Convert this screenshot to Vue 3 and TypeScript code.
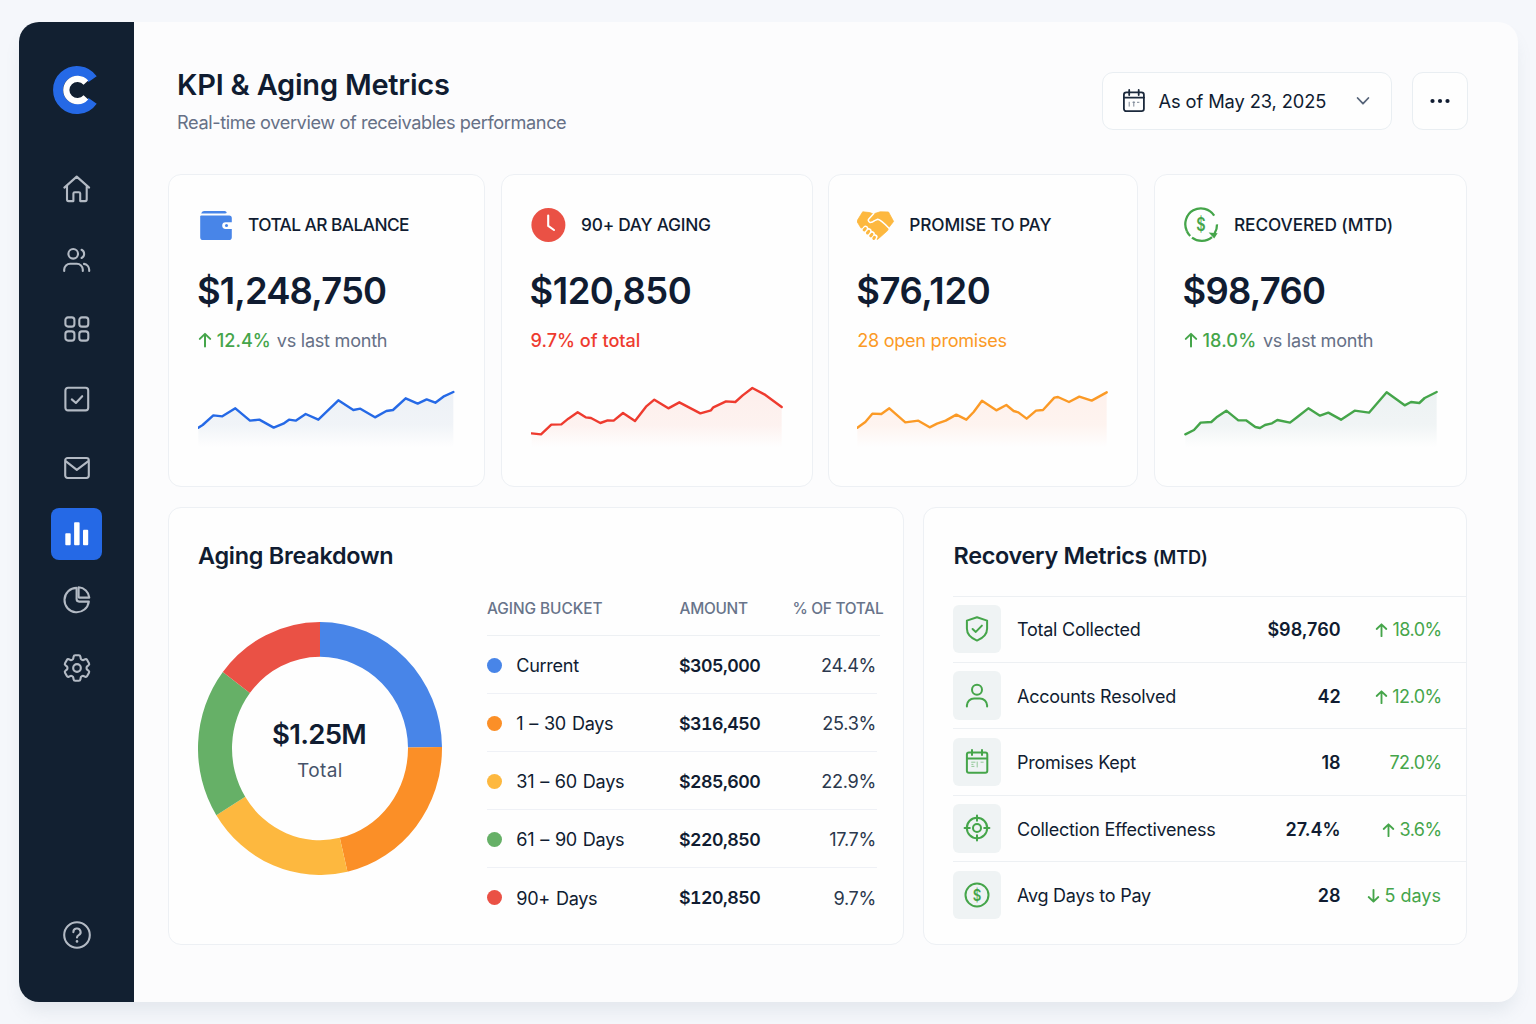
<script setup lang="ts">
type Kpi = {
  key: string
  label: string
  value: string
  trend?: string
  note: string
  line: string
  tint: string
  points: number[][]
}

const pts = (s: string): number[][] => s.split(' ').map((p) => p.split(',').map(Number))

const kpis: Kpi[] = [
  {
    key: 'balance',
    label: 'TOTAL AR BALANCE',
    value: '$1,248,750',
    trend: '12.4%',
    note: 'vs last month',
    line: '#2569e6',
    tint: '#edf1f6',
    points: pts('1,128 14,120 46,91 73,94 112,70 156,107 184,104 227,128 256,116 273,104 293,107 323,87 361,104 421,46 466,75 487,71 531,97 565,78 585,75 623,40 659,56 686,43 712,53 736,35 766,21'),
  },
  {
    key: 'aging',
    label: '90+ DAY AGING',
    value: '$120,850',
    note: '9.7% of total',
    line: '#ee3b2f',
    tint: '#fdefec',
    points: pts('2,145 30,148 61,119 91,118 112,101 140,82 164,97 180,99 208,114 230,106 248,107 276,84 312,108 345,65 370,44 412,70 445,52 508,85 540,76 547,67 585,49 613,51 635,31 664,9 700,28 752,66'),
  },
  {
    key: 'promise',
    label: 'PROMISE TO PAY',
    value: '$76,120',
    note: '28 open promises',
    line: '#fb9a26',
    tint: '#fef1ec',
    points: pts('1,128 25,111 46,86 73,87 97,70 145,112 184,107 218,127 240,116 266,107 298,89 328,104 350,81 375,47 418,76 448,60 470,78 484,82 509,101 537,77 558,75 592,38 603,36 636,51 667,35 704,47 749,22'),
  },
  {
    key: 'recovered',
    label: 'RECOVERED (MTD)',
    value: '$98,760',
    trend: '18.0%',
    note: 'vs last month',
    line: '#45a54a',
    tint: '#edf2f3',
    points: pts('4,148 30,135 50,113 82,111 100,95 127,77 163,106 186,106 214,126 228,129 243,120 264,115 280,105 318,113 340,96 373,70 408,92 433,83 471,104 512,77 555,83 608,22 662,61 681,51 706,54 722,39 758,21'),
  },
]

const join = (p: number[][]): string => p.map((a) => a.join(',')).join(' ')
const area = (p: number[][]): string =>
  `${join(p)} ${p[p.length - 1][0]},186 ${p[0][0]},186`

const buckets = [
  { name: 'Current', amount: '$305,000', share: '24.4%', color: '#4885e8' },
  { name: '1 – 30 Days', amount: '$316,450', share: '25.3%', color: '#fb8f27' },
  { name: '31 – 60 Days', amount: '$285,600', share: '22.9%', color: '#fdb83f' },
  { name: '61 – 90 Days', amount: '$220,850', share: '17.7%', color: '#66b067' },
  { name: '90+ Days', amount: '$120,850', share: '9.7%', color: '#ea5145' },
]

/* Segment boundaries in degrees, clockwise from the top. */
const stops = [0, 89.3, 167, 238.2, 307.2, 360]

const ringPoint = (deg: number, rx: number, ry: number): string => {
  const t = (deg * Math.PI) / 180
  return `${(rx * Math.sin(t)).toFixed(2)} ${(-ry * Math.cos(t)).toFixed(2)}`
}

const segments = buckets.map((b, i) => {
  const from = stops[i]
  const to = stops[i + 1]
  return {
    color: b.color,
    d: `M${ringPoint(from, 122, 126.5)}A122 126.5 0 0 1 ${ringPoint(to, 122, 126.5)}L${ringPoint(to, 88, 91.7)}A88 91.7 0 0 0 ${ringPoint(from, 88, 91.7)}Z`,
  }
})

const metrics = [
  { icon: 'shield', name: 'Total Collected', value: '$98,760', dir: 'up', change: '18.0%' },
  { icon: 'user', name: 'Accounts Resolved', value: '42', dir: 'up', change: '12.0%' },
  { icon: 'calendar', name: 'Promises Kept', value: '18', dir: '', change: '72.0%' },
  { icon: 'target', name: 'Collection Effectiveness', value: '27.4%', dir: 'up', change: '3.6%' },
  { icon: 'dollar', name: 'Avg Days to Pay', value: '28', dir: 'down', change: '5 days' },
]
</script>

<template>
  <div class="page">
    <div class="window">
      <aside class="sidebar">
        <svg class="logo" viewBox="0 0 48 50">
          <path d="M39.6 14.1A19 19 0 1 0 39.6 35.9" fill="none" stroke="#2569e6" stroke-width="10" />
          <path d="M32.9 17.6A11.2 11.2 0 1 0 32.9 32.4" fill="none" stroke="#fff" stroke-width="6.2" />
        </svg>
        <nav class="nav">
          <a class="item">
            <svg viewBox="0 0 28 28"><path d="M1.4 12.6 13.7 1.6 26.1 12.6M4 10.8V24.6Q4 26.1 5.5 26.1H10.4V18.6Q10.4 17.2 11.8 17.2H15.8Q17.2 17.2 17.2 18.6V26.1H22.2Q23.7 26.1 23.7 24.6V10.8" /></svg>
          </a>
          <a class="item">
            <svg viewBox="0 0 28 28"><circle cx="10.2" cy="6.8" r="4.8" /><path d="M1.2 24V22.6A6 6 0 0 1 7.2 16.7H13.8A6 6 0 0 1 19.8 22.6V24M18.6 2.8A4.6 4.6 0 0 1 18.6 11M21 16.9A6 6 0 0 1 26.2 22.8V24" /></svg>
          </a>
          <a class="item">
            <svg viewBox="0 0 28 28"><rect x="2.4" y="2.4" width="9" height="9.2" rx="2.6" /><rect x="16.3" y="2.4" width="9" height="9.2" rx="2.6" /><rect x="2.4" y="16.4" width="9" height="9.2" rx="2.6" /><rect x="16.3" y="16.4" width="9" height="9.2" rx="2.6" /></svg>
          </a>
          <a class="item">
            <svg viewBox="0 0 28 28"><rect x="2.4" y="2.8" width="22.8" height="22.6" rx="2.6" /><path d="M8.8 14.4 12.9 18 19.2 11.2" /></svg>
          </a>
          <a class="item">
            <svg viewBox="0 0 28 28"><rect x="2.2" y="4" width="23.6" height="20" rx="2.4" /><path d="M3 7.4 13.8 15.8 25 7.4" /></svg>
          </a>
          <a class="item active">
            <svg viewBox="0 0 28 28"><rect x="2.3" y="13.2" width="5.4" height="12" rx=".9" /><rect x="11.1" y="2.2" width="5.5" height="23" rx=".9" /><rect x="20" y="9.8" width="5.2" height="15.4" rx=".9" /></svg>
          </a>
          <a class="item">
            <svg viewBox="0 0 28 28"><path d="M13.6 1.9A12.2 12.2 0 1 0 25.8 15.6H16.1Q13.6 15.6 13.6 13.1Z" /><path d="M15.6 1.3A11.4 11.4 0 0 1 26.3 11.6H16.4Q15.6 11.6 15.6 10.8Z" /></svg>
          </a>
          <a class="item">
            <svg class="gear" viewBox="0 0 24 24"><path d="M9.594 3.94c.09-.542.56-.94 1.11-.94h2.593c.55 0 1.02.398 1.11.94l.213 1.281c.063.374.313.686.645.87.074.04.147.083.22.127.325.196.72.257 1.075.124l1.217-.456a1.125 1.125 0 0 1 1.37.49l1.296 2.247a1.125 1.125 0 0 1-.26 1.431l-1.003.827c-.293.241-.438.613-.43.992a7.723 7.723 0 0 1 0 .255c-.008.378.137.75.43.991l1.004.827c.424.35.534.955.26 1.43l-1.298 2.247a1.125 1.125 0 0 1-1.369.491l-1.217-.456c-.355-.133-.75-.072-1.076.124a6.47 6.47 0 0 1-.22.128c-.331.183-.581.495-.644.869l-.213 1.281c-.09.543-.56.94-1.11.94h-2.594c-.55 0-1.019-.398-1.11-.94l-.213-1.281c-.062-.374-.312-.686-.644-.87a6.52 6.52 0 0 1-.22-.127c-.325-.196-.72-.257-1.076-.124l-1.217.456a1.125 1.125 0 0 1-1.369-.49l-1.297-2.247a1.125 1.125 0 0 1 .26-1.431l1.004-.827c.292-.24.437-.613.43-.991a6.932 6.932 0 0 1 0-.255c.007-.38-.138-.751-.43-.992l-1.004-.827a1.125 1.125 0 0 1-.26-1.43l1.297-2.247a1.125 1.125 0 0 1 1.37-.491l1.216.456c.356.133.751.072 1.076-.124.072-.044.146-.086.22-.128.332-.183.582-.495.644-.869l.214-1.28Z" /><circle cx="12" cy="12" r="2.7" /></svg>
          </a>
        </nav>
        <a class="item help">
          <svg viewBox="0 0 28 28"><circle cx="14" cy="14" r="12.8" /><path d="M10.4 11.1A3.6 3.5 0 1 1 15.7 14.1Q14 15.1 14 16.5" /><path d="M14 20.2V20.4" stroke-width="2.6" /></svg>
        </a>
      </aside>

      <main class="main">
        <header class="header">
          <div class="heading">
            <h1>KPI &amp; Aging Metrics</h1>
            <p>Real-time overview of receivables performance</p>
          </div>
          <div class="controls">
            <button class="date">
              <svg class="cal" viewBox="0 0 24 24"><rect x="1.9" y="3.4" width="20" height="18.8" rx="2.4" /><path d="M2 8.6H22M7.2 1V6M16.7 1V6" /><path class="marks" d="M7.2 13.2V17.2M11.8 12.8V17.2M10.9 13.3H12.7M15.4 13.3H17" /></svg>
              <span>As of May 23, 2025</span>
              <svg class="chevron" viewBox="0 0 14 10"><path d="M1.6 2 7 7.7 12.4 2" /></svg>
            </button>
            <button class="more" aria-label="More">
              <svg viewBox="0 0 20 6"><circle cx="2.5" cy="3" r="2.1" /><circle cx="10" cy="3" r="2.1" /><circle cx="17.5" cy="3" r="2.1" /></svg>
            </button>
          </div>
        </header>

        <section class="kpis">
          <article v-for="k in kpis" :key="k.key" class="card kpi" :class="k.key">
            <div class="kpi-head">
              <div class="kpi-icon">
                <svg v-if="k.key === 'balance'" width="36" height="36" viewBox="0 0 36 36">
                  <path d="M6 4H26.6Q28.4 4 28.8 6.1L27 6.6H3.2Q3.6 4 6 4Z" fill="#4885e8" />
                  <path d="M3.4 8.4H31.2Q33.8 8.4 33.8 11V15.2H27.6A3.2 3.2 0 0 0 27.6 22H33.8V30.2Q33.8 33 31 33H5Q2.2 33 2.2 30.2V9Q2.4 8.4 3.4 8.4Z" fill="#4885e8" />
                  <circle cx="28.5" cy="18.5" r="1.5" fill="#4885e8" />
                </svg>
                <svg v-else-if="k.key === 'aging'" width="35" height="36" viewBox="0 0 35 36">
                  <circle cx="17.4" cy="18" r="17" fill="#ea5145" />
                  <path d="M17.2 8.6V18.9L23 23" fill="none" stroke="#fff" stroke-width="2.1" stroke-linecap="round" stroke-linejoin="round" />
                </svg>
                <svg v-else-if="k.key === 'promise'" width="38" height="36" viewBox="0.8 0 38 36">
                  <path d="M6.5 4.8 13.6 5.6 17 7 24 4.8 32.3 5 37.4 14.4 32.6 20.6 31.4 23.6 21.4 32.4 17 30 7 21.2 4.6 20.8.6 14.2Z" fill="#fdb83f" stroke="#fdb83f" stroke-width=".8" stroke-linejoin="round" />
                  <path d="M17.6 6.4 12.4 12.2Q11.4 14.2 13.6 15.4 16 15.6 18.4 13.6L21.6 12.2Q24.6 12.6 32.8 21.2" fill="none" stroke="#fff" stroke-width="1.5" stroke-linecap="round" stroke-linejoin="round" />
                  <g fill="none" stroke-linecap="round">
                    <path d="M8.4 22.4 9.4 21.2M11.6 25.4 12.8 23.8M14.8 28.4 16 26.8M18 31 18.8 29.8" stroke="#fff" stroke-width="5.2" />
                    <path d="M7.9 22.9 9.1 21.5M11.2 26 12.5 24.3M14.5 28.9 15.7 27.3M17.6 31.4 18.3 30.3" stroke="#fdb83f" stroke-width="3" />
                  </g>
                </svg>
                <svg v-else width="36" height="36" viewBox="0 0 36 36">
                  <g fill="none" stroke="#45a54a" stroke-width="2.3">
                    <path d="M30.2 8.6A15.7 15.9 0 0 0 2.9 24.2" />
                    <path d="M2.9 24.2A15.9 15.9 0 0 0 6.2 29M8 30.6A15.9 15.9 0 0 0 28 30.2" />
                    <path d="M33 17.4A15.9 15.9 0 0 1 30.6 26.4" />
                  </g>
                  <path d="M24.6 25.4 33.6 26.2 30.2 31.6Z" fill="#45a54a" />
                  <text x="21.2" y="24.3" text-anchor="middle" transform="scale(.8 1)" class="coin">$</text>
                </svg>
              </div>
              <h2>{{ k.label }}</h2>
            </div>
            <div class="value">{{ k.value }}</div>
            <div class="change">
              <template v-if="k.trend">
                <svg class="arrow" viewBox="0 0 14 16"><path d="M7 14.6V2M1.8 6.9 7 1.9 12.2 6.9" /></svg>
                <b>{{ k.trend }}</b>
              </template>
              <span>{{ k.note }}</span>
            </div>
            <svg class="spark" viewBox="0 0 774 195">
              <defs>
                <linearGradient :id="'fill-' + k.key" x1="0" y1="20" x2="0" y2="186" gradientUnits="userSpaceOnUse">
                  <stop offset="0" :stop-color="k.tint" />
                  <stop offset=".6" :stop-color="k.tint" stop-opacity=".8" />
                  <stop offset="1" :stop-color="k.tint" stop-opacity="0" />
                </linearGradient>
              </defs>
              <polygon :points="area(k.points)" :fill="`url(#fill-${k.key})`" />
              <polyline :points="join(k.points)" fill="none" :stroke="k.line" stroke-width="7.2" stroke-linejoin="round" stroke-linecap="round" />
            </svg>
          </article>
        </section>

        <section class="panels">
          <article class="card breakdown">
            <h3>Aging Breakdown</h3>
            <div class="breakdown-body">
              <div class="donut">
                <svg viewBox="-122 -126.5 244 253">
                  <path v-for="s in segments" :key="s.color" :d="s.d" :fill="s.color" />
                </svg>
                <div class="donut-label">
                  <strong>$1.25M</strong>
                  <span>Total</span>
                </div>
              </div>
              <div class="table">
                <div class="thead">
                  <span>AGING BUCKET</span>
                  <span>AMOUNT</span>
                  <span>% OF TOTAL</span>
                </div>
                <div v-for="b in buckets" :key="b.name" class="trow">
                  <i :style="{ background: b.color }"></i>
                  <span class="name">{{ b.name }}</span>
                  <span class="amount">{{ b.amount }}</span>
                  <span class="share">{{ b.share }}</span>
                </div>
              </div>
            </div>
          </article>

          <article class="card recovery">
            <h3>Recovery Metrics <small>(MTD)</small></h3>
            <div v-for="m in metrics" :key="m.name" class="metric">
              <div class="tile">
                <svg viewBox="0 0 28 28">
                  <template v-if="m.icon === 'shield'">
                    <path d="M14 2.2 24.1 5.6V13.6Q24.1 21.6 14 25.6 3.9 21.6 3.9 13.6V5.6Z" />
                    <path d="M9.6 14 12.8 16.9 18.9 10.6" />
                  </template>
                  <template v-else-if="m.icon === 'user'">
                    <circle cx="14" cy="7.7" r="5" />
                    <path d="M3.9 24.6V23.4A7.2 7.2 0 0 1 11.1 16.4H16.9A7.2 7.2 0 0 1 24.1 23.4V24.6" />
                  </template>
                  <template v-else-if="m.icon === 'calendar'">
                    <rect x="3.9" y="4.4" width="20.4" height="20.4" rx="2" />
                    <path d="M4 10.4H24M9 2V7M19 2V7" />
                    <path class="marks" d="M8.6 14.2H12M8.8 16.4H10M8.8 18.4H11M14.2 14V19M18 14.2H20.2" />
                  </template>
                  <template v-else-if="m.icon === 'target'">
                    <circle cx="14" cy="14" r="10.2" />
                    <circle cx="14" cy="14" r="4" />
                    <path d="M14 1.6V6.8M14 21.2V26.4M1.6 14H6.8M21.2 14H26.4" />
                  </template>
                  <template v-else>
                    <circle cx="14" cy="14" r="11.5" />
                    <text x="17.5" y="20" text-anchor="middle" transform="scale(.8 1)" class="coin">$</text>
                  </template>
                </svg>
              </div>
              <span class="metric-name">{{ m.name }}</span>
              <span class="metric-value">{{ m.value }}</span>
              <span class="metric-change" :class="{ days: m.dir === 'down' }">
                <svg v-if="m.dir" class="arrow" :class="m.dir" viewBox="0 0 14 16"><path d="M7 14.6V2M1.8 6.9 7 1.9 12.2 6.9" /></svg>
                {{ m.change }}
              </span>
            </div>
          </article>
        </section>
      </main>
    </div>
  </div>
</template>

<style>
body {
  background: #f5f7fb;
}
</style>

<style scoped>
* {
  box-sizing: border-box;
}

.page {
  height: 1024px;
  padding: 22px 18px 22px 19px;
  overflow: hidden;
  background: #f5f7fb;
  font-family: Inter, 'Liberation Sans', sans-serif;
  color: #101c31;
}

.window {
  display: flex;
  height: 980px;
  border-radius: 20px;
  overflow: hidden;
  background: #fcfcfd;
  box-shadow: 0 12px 18px -4px rgba(112, 134, 150, 0.14);
}

/* Sidebar */
.sidebar {
  display: flex;
  flex-direction: column;
  align-items: center;
  width: 114.5px;
  padding: 43px 0 0 1px;
  background: #122031;
}

.logo {
  width: 48px;
  height: 50px;
}

.nav {
  display: flex;
  flex-direction: column;
  align-items: center;
  margin-top: 48px;
}

.item {
  display: flex;
  align-items: center;
  justify-content: center;
  width: 51px;
  height: 52px;
  border-radius: 8px;
}

.item:nth-child(2) { margin-top: 19.5px; }
.item:nth-child(3) { margin-top: 16.5px; }
.item:nth-child(4) { margin-top: 18px; }
.item:nth-child(5) { margin-top: 17.3px; }
.item:nth-child(6) { margin-top: 14.2px; }
.item:nth-child(7) { margin-top: 13.2px; }
.item:nth-child(8) { margin-top: 16.6px; }

.item svg {
  width: 28px;
  height: 28px;
  fill: none;
  stroke: #b3bac4;
  stroke-width: 2.1;
  stroke-linecap: round;
  stroke-linejoin: round;
}

.item .gear {
  width: 34px;
  height: 34px;
  stroke-width: 1.5;
}

.item.active {
  background: #2569e6;
}

.item.active svg {
  fill: #fff;
  stroke: none;
}

.item.help {
  margin-top: auto;
  margin-bottom: 41px;
}

/* Header */
.main {
  flex: 1;
  padding: 43.5px 50.5px 0 34.5px;
}

.header {
  display: flex;
  justify-content: space-between;
  height: 108.5px;
}

.heading {
  padding-left: 9px;
}

h1,
h2,
h3,
p {
  margin: 0;
}

h1 {
  font-size: 29px;
  font-weight: 600;
  line-height: 37px;
  letter-spacing: -0.22px;
}

.heading p {
  margin-top: 7.5px;
  font-size: 18.2px;
  line-height: 24px;
  letter-spacing: -0.41px;
  color: #667086;
}

.controls {
  display: flex;
  gap: 20.5px;
  height: 58px;
  margin-top: 6.5px;
}

.date,
.more {
  display: flex;
  align-items: center;
  border: 1px solid #e9eef2;
  border-radius: 11px;
  background: #fefefe;
  color: inherit;
  font-family: inherit;
}

.date {
  width: 290px;
  padding: 0 0 0 19px;
  font-size: 18.3px;
  letter-spacing: -0.1px;
}

.cal {
  width: 24px;
  height: 24px;
  margin-right: 13px;
  fill: none;
  stroke: #1b293c;
  stroke-width: 1.8;
  stroke-linecap: round;
}

.cal .marks {
  stroke: #7c8796;
  stroke-width: 1;
}

.chevron {
  width: 14px;
  height: 10px;
  margin-left: 29.5px;
  fill: none;
  stroke: #58657a;
  stroke-width: 1.8;
  stroke-linecap: round;
  stroke-linejoin: round;
}

.more {
  justify-content: center;
  width: 55.5px;
  padding: 0;
}

.more svg {
  width: 20px;
  height: 6px;
  fill: #101c31;
}

/* Cards */
.card {
  border: 1px solid #edf0f4;
  border-radius: 13px;
  background: #fefefe;
}

.kpis {
  display: grid;
  grid-template-columns: 317px 312px 310px 313.5px;
  column-gap: 15.6px;
}

.kpi {
  height: 313px;
  padding: 32px 0 0 29px;
}

.promise {
  padding-left: 28px;
}

.recovered {
  padding-left: 28.8px;
}

.kpi-head {
  display: flex;
  align-items: center;
  height: 36px;
}

.kpi-icon {
  flex: none;
  display: flex;
  width: 50px;
  height: 36px;
}

h2 {
  font-size: 17.3px;
  font-weight: 500;
  line-height: 24px;
  letter-spacing: -0.55px;
  white-space: nowrap;
}

.aging h2 { margin-left: 0.5px; letter-spacing: -0.25px; }
.promise h2 { margin-left: 2px; letter-spacing: -0.1px; }
.recovered h2 { margin-left: 0.4px; letter-spacing: -0.1px; }

.value {
  height: 44px;
  margin-top: 26px;
  margin-left: -1px;
  font-size: 36.4px;
  font-weight: 600;
  line-height: 44px;
  letter-spacing: -0.5px;
}

.balance .value {
  letter-spacing: -0.88px;
}

.promise .value {
  letter-spacing: -0.35px;
}

.recovered .value {
  letter-spacing: -0.75px;
}

.change {
  display: flex;
  align-items: center;
  height: 24px;
  margin-top: 15px;
  font-size: 18.1px;
  letter-spacing: -0.27px;
  color: #667086;
}

.change b {
  margin: 0 6px 0 4.8px;
  font-weight: 500;
  letter-spacing: 0;
  color: #45a54a;
}

.recovered .change b {
  margin-right: 6.6px;
  letter-spacing: 0.15px;
}

.aging .change {
  font-weight: 500;
  letter-spacing: 0;
  color: #ee3b2f;
}

.promise .change {
  color: #fb9a26;
}

.arrow {
  width: 14px;
  height: 16px;
  fill: none;
  stroke: #45a54a;
  stroke-width: 2;
  stroke-linecap: round;
  stroke-linejoin: round;
}

.arrow.down {
  transform: rotate(180deg);
}

.spark {
  display: block;
  width: 258px;
  height: 65px;
  margin-top: 33px;
}

.coin {
  font-size: 18px;
  font-weight: 600;
  fill: #45a54a;
  stroke: none;
}

/* Lower panels */
.panels {
  display: grid;
  grid-template-columns: 735.5px 544.5px;
  column-gap: 19.4px;
  margin-top: 20px;
}

.panels .card {
  height: 438px;
}

h3 {
  font-size: 23.4px;
  font-weight: 600;
  line-height: 32px;
  letter-spacing: -0.25px;
}

.breakdown {
  padding: 32px 0 0 29px;
}

.breakdown-body {
  display: flex;
}

.donut {
  position: relative;
  width: 244px;
  height: 253px;
  margin-top: 50px;
}

.donut svg {
  display: block;
  width: 244px;
  height: 253px;
}

.donut-label {
  position: absolute;
  inset: 0;
  display: flex;
  flex-direction: column;
  align-items: center;
  padding-top: 94px;
}

.donut-label strong {
  margin-left: -2px;
  font-size: 27.6px;
  font-weight: 600;
  line-height: 36px;
  letter-spacing: -0.75px;
}

.donut-label span {
  margin-top: 7px;
  font-size: 19px;
  line-height: 24px;
  letter-spacing: 0.4px;
  color: #46536a;
}

.table {
  width: 397px;
  margin-left: 45px;
  padding-top: 5px;
}

.thead {
  display: grid;
  grid-template-columns: 192.5px 113px auto;
  align-items: center;
  width: 393px;
  height: 59px;
  padding-top: 5px;
  border-bottom: 1px solid #edf0f3;
  font-size: 15.4px;
  font-weight: 500;
  letter-spacing: -0.05px;
  white-space: nowrap;
  color: #68748a;
}

.thead span:nth-child(n + 2) {
  letter-spacing: -0.28px;
}

.trow {
  display: grid;
  grid-template-columns: 29.3px 162.7px 1fr auto;
  align-items: center;
  width: 389.5px;
  height: 57.95px;
  padding: 1.6px 0.5px 0 0;
  border-bottom: 1px solid #eff1f6;
  font-size: 18.1px;
}

.trow:last-child {
  border-bottom: 0;
}

.trow i {
  width: 15px;
  height: 15px;
  border-radius: 50%;
}

.name {
  letter-spacing: -0.32px;
  word-spacing: 1.2px;
  white-space: nowrap;
}

.amount {
  font-size: 17.8px;
  font-weight: 600;
  font-feature-settings: 'tnum';
  letter-spacing: -0.5px;
}

.share {
  letter-spacing: -0.3px;
  color: #2b384d;
}

.recovery {
  padding: 32px 0 0 29.6px;
}

.recovery h3 {
  height: 55.5px;
  letter-spacing: -0.3px;
}

.recovery small {
  font-size: 18.2px;
  letter-spacing: -0.15px;
}

.metric {
  display: flex;
  align-items: center;
  height: 66.4px;
  padding-right: 24.8px;
  border-top: 1px solid #edf0f3;
  font-size: 18px;
  line-height: 24px;
}

.tile {
  display: flex;
  align-items: center;
  justify-content: center;
  width: 47.5px;
  height: 48.5px;
  border-radius: 6px;
  background: #eff3f4;
}

.tile svg {
  width: 28px;
  height: 28px;
  fill: none;
  stroke: #45a54a;
  stroke-width: 2;
  stroke-linecap: round;
  stroke-linejoin: round;
}

.tile .marks {
  stroke-width: 1;
  opacity: 0.55;
}

.tile .coin {
  font-size: 16.5px;
}

.metric-name {
  flex: 1;
  margin-left: 16px;
  padding-top: 2.4px;
  letter-spacing: -0.25px;
}

.metric-value {
  padding-top: 2.4px;
  font-weight: 600;
}

.metric-change {
  display: flex;
  align-items: center;
  justify-content: flex-end;
  gap: 4.5px;
  width: 101px;
  padding-top: 2.4px;
  letter-spacing: -0.55px;
  color: #45a54a;
}

.metric-change .arrow {
  width: 13px;
}

.metric-change.days {
  padding-right: 0.6px;
  letter-spacing: 0;
}
</style>
